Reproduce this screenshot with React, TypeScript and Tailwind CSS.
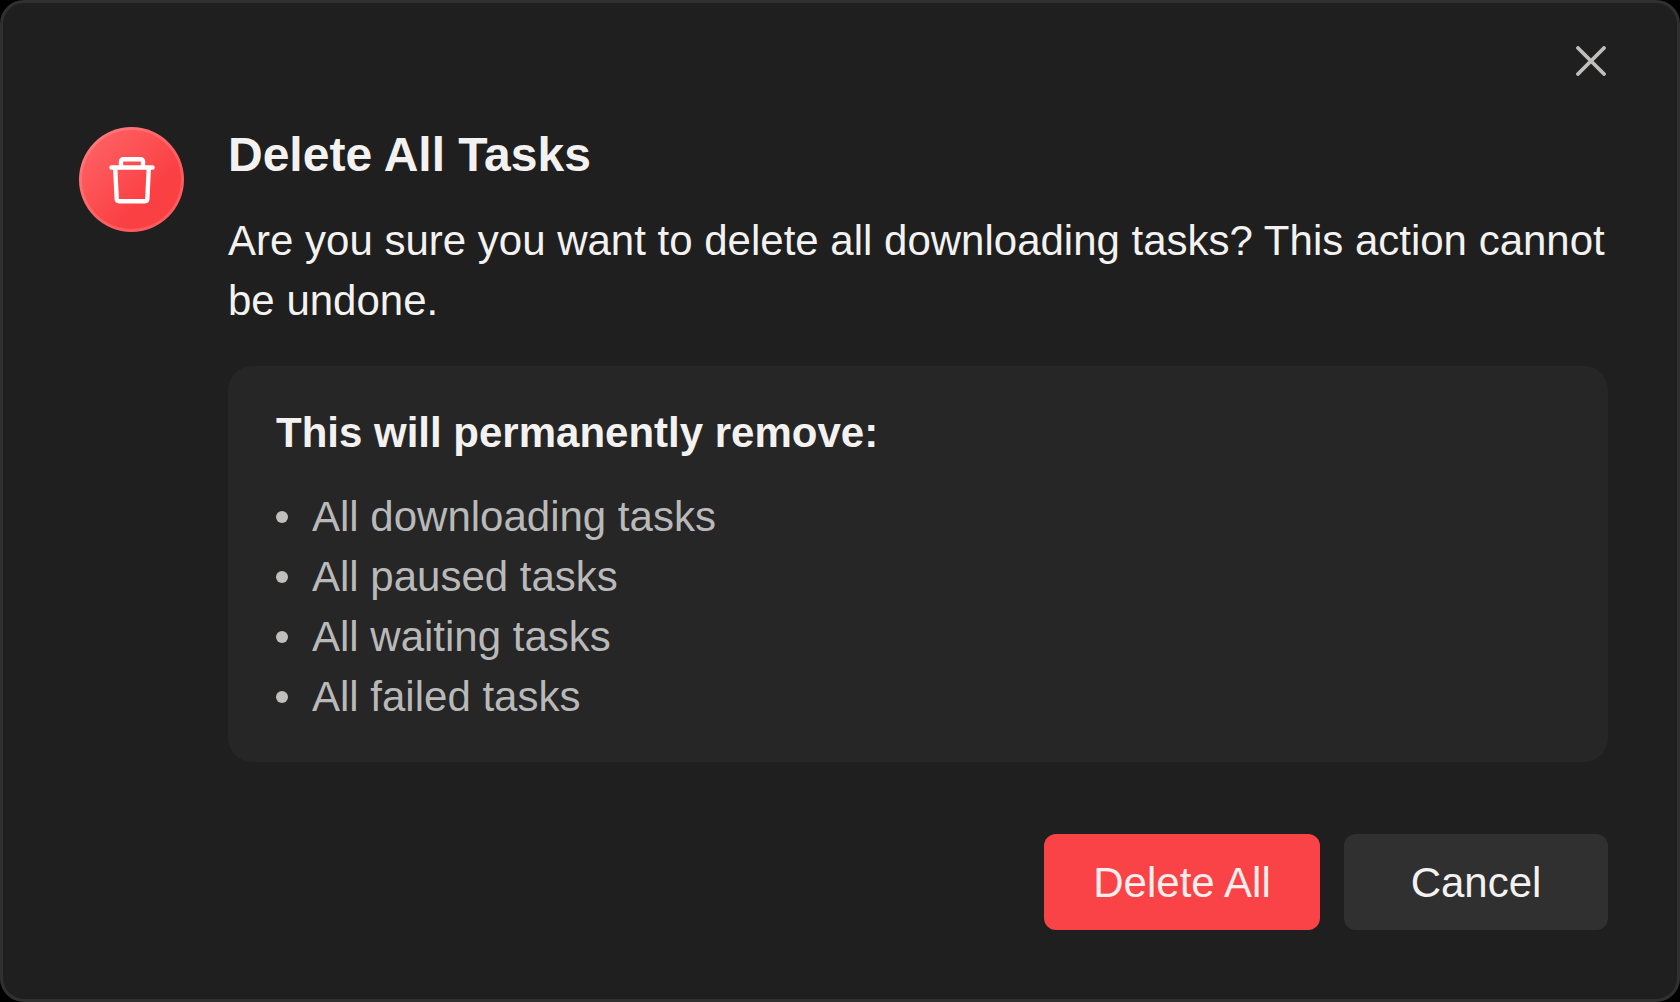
import * as React from 'react';

const removedItems = ['All downloading tasks', 'All paused tasks', 'All waiting tasks', 'All failed tasks'];

function TrashIcon() {
    return (
        <svg viewBox="0 0 48 48" className="size-12" fill="none" stroke="#fff" strokeWidth="4.4" strokeLinecap="round" strokeLinejoin="round" aria-hidden="true">
            <path d="M3.500 11.5h41" />
            <path d="M13 11V5.500a2.300 2.300 0 0 1 2.300-2.300h17.400a2.300 2.300 0 0 1 2.300 2.300V11" />
            <path d="M7.200 12l1.500 31a2.300 2.300 0 0 0 2.300 2.200h26a2.300 2.300 0 0 0 2.300-2.200l1.500-31" />
        </svg>
    );
}

function CloseIcon() {
    return (
        <svg viewBox="0 0 30 30" className="size-[30px]" fill="none" stroke="#c0bfbe" strokeWidth="3.8" strokeLinecap="round" aria-hidden="true">
            <path d="M2 2l26 26M28 2L2 28" />
        </svg>
    );
}

export default function App() {
    return (
        <div className="min-h-screen bg-black font-['Liberation_Sans',Arial,sans-serif] text-[#f3f2f0]">
            <div
                role="dialog"
                aria-labelledby="dialog-title"
                className="flex min-h-screen flex-col rounded-[24px] border-3 border-[#303030] bg-[#1f1f1f] pt-[43px] pr-[69px] pb-[69px] pl-[76px]"
            >
                <div className="flex justify-end">
                    <button type="button" aria-label="Close" className="mr-0.5">
                        <CloseIcon />
                    </button>
                </div>
                <div className="mt-[51px] flex gap-11">
                    <div className="flex size-[105px] shrink-0 items-center justify-center rounded-full bg-linear-to-br from-[#ff666a] to-[#fb4044] to-65% inset-ring-3 inset-ring-white/15">
                        <TrashIcon />
                    </div>
                    <div className="flex-1">
                        <h1 id="dialog-title" className="text-[48px] leading-[56px] font-bold">
                            Delete All Tasks
                        </h1>
                        <p className="mt-7 text-[42px] leading-[60px]">
                            Are you sure you want to delete all downloading tasks? This action cannot be undone.
                        </p>
                        <div className="mt-[35px] rounded-[24px] bg-[#262626] px-12 pt-[37px] pb-[35px]">
                            <h2 className="text-[42px] leading-[60px] font-bold">This will permanently remove:</h2>
                            <ul className="mt-6 text-[42px] leading-[60px] text-[#b9b9b9]">
                                {removedItems.map((item) => (
                                    <li key={item} className="flex items-center gap-6">
                                        <span className="size-3 rounded-full bg-[#c0bfbe]" />
                                        {item}
                                    </li>
                                ))}
                            </ul>
                        </div>
                    </div>
                </div>
                <div className="mt-[72px] flex justify-end gap-6 text-[42px] leading-[60px]">
                    <button type="button" className="h-24 w-[276px] rounded-[12px] bg-[#fa4347] pt-0.5 text-[#fdeeed]">
                        Delete All
                    </button>
                    <button type="button" className="h-24 w-[264px] rounded-[12px] bg-[#303030] pt-0.5">
                        Cancel
                    </button>
                </div>
            </div>
        </div>
    );
}
